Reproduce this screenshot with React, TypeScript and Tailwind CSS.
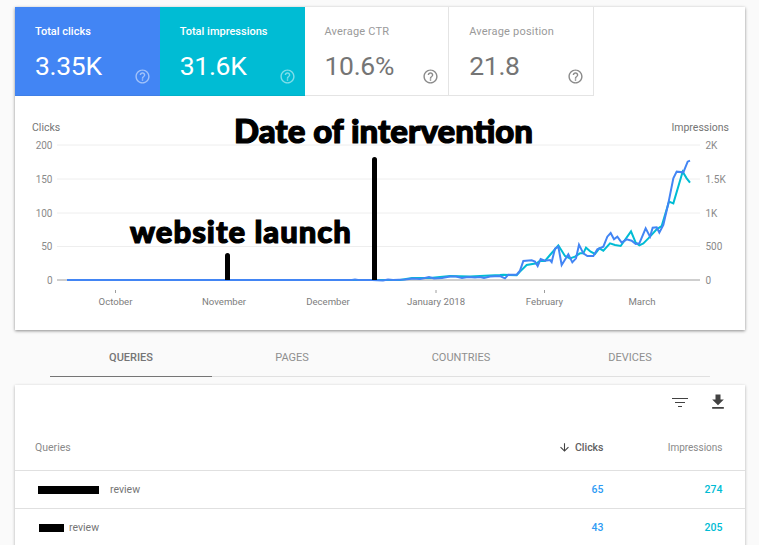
const helpPath =
  'M11 18h2v-2h-2v2zm1-16C6.48 2 2 6.48 2 12s4.48 10 10 10 10-4.48 10-10S17.52 2 12 2zm0 18c-4.41 0-8-3.59-8-8s3.59-8 8-8 8 3.59 8 8-3.59 8-8 8zm0-14c-2.21 0-4 1.79-4 4h2c0-1.1.9-2 2-2s2 .9 2 2c0 2-3 1.75-3 5h2c0-2.25 3-2.5 3-5 0-2.21-1.79-4-4-4z';

const tiles = [
  { label: 'Total clicks', value: '3.35K', active: 'bg-[#4285f4] border-[#3f7fe6]' },
  { label: 'Total impressions', value: '31.6K', active: 'bg-[#00bcd4] border-[#00b2c9]' },
  { label: 'Average CTR', value: '10.6%', active: '' },
  { label: 'Average position', value: '21.8', active: '' },
];

const Tile = ({ label, value, active }: { label: string; value: string; active: string }) => (
  <div
    className={`relative h-[89px] w-[144.75px] shrink-0 border-b pl-5 pt-[18px] ${
      active ? `${active} text-white` : 'border-r border-[#e4e4e4] bg-white text-[#757575]'
    }`}
  >
    <div className={`text-[11px] leading-[13px] ${active ? 'font-medium' : 'tracking-[0.2px] text-[#9a9a9a]'}`}>
      {label}
    </div>
    <div className="mt-[12px] text-[26.5px] leading-[32px] tracking-[-0.3px]">{value}</div>
    <svg
      viewBox="0 0 24 24"
      className={`absolute right-[9px] top-[61px] h-[17px] w-[17px] ${active ? 'fill-white/50' : 'fill-[#8a8a8a]'}`}
    >
      <path d={helpPath} />
    </svg>
  </div>
);

// points read off the reference, in page pixels
const leftClicks: [number, number][] = [
  [67, 280], [352, 280], [355, 279.5], [358, 280], [372, 280], [383, 280.5], [388, 279.5], [393, 280],
  [405, 279.5], [413, 278.5], [420, 279], [425, 278], [429, 277], [434, 278.5], [442, 278], [450, 276.5],
  [456, 276.5], [462, 278], [468, 277], [475, 277.5], [480, 277], [484, 278], [490, 276.5], [500, 276],
];
const leftImpr: [number, number][] = [
  [67, 280], [355, 280], [400, 280], [412, 278], [420, 278], [430, 278], [450, 276], [470, 276.5], [500, 275],
];
const zoomed = (pts: number[][]) => pts.map(([x, y]) => [500 + x / 3, 150 + y / 3]);
const clicks = [
  ...leftClicks,
  ...zoomed([
    [15, 385], [25, 374], [50, 374], [60, 362], [70, 333], [95, 331], [105, 335], [113, 348], [122, 327],
    [135, 332], [150, 330], [155, 336], [165, 296], [175, 290], [185, 345], [205, 313], [217, 337], [228, 325],
    [237, 284], [250, 310], [262, 318], [280, 318], [292, 298], [310, 290], [322, 260], [332, 249], [342, 268],
    [352, 260], [365, 278], [380, 268], [395, 272], [407, 282], [418, 280], [437, 235], [450, 260], [458, 233],
    [470, 232], [478, 248], [490, 225], [505, 160], [520, 85], [530, 65], [550, 67], [563, 35], [570, 32],
  ]),
];
const impressions = [
  ...leftImpr,
  ...zoomed([
    [10, 374], [50, 376], [60, 365], [80, 345], [110, 340], [120, 332], [135, 333], [150, 315], [175, 286],
    [195, 318], [210, 325], [225, 320], [240, 310], [250, 310], [258, 293], [272, 305], [285, 312], [298, 295],
    [310, 302], [330, 280], [345, 285], [362, 288], [393, 244], [407, 278], [418, 286], [430, 280], [445, 265],
    [470, 238], [485, 228], [507, 155], [520, 160], [548, 65], [560, 85], [570, 98],
  ]),
];
const toPoints = (pts: number[][]) => pts.map(([x, y]) => `${x},${y}`).join(' ');

const gridRows = [
  { y: 145, l: '200', r: '2K' },
  { y: 179, l: '150', r: '1.5K' },
  { y: 213, l: '100', r: '1K' },
  { y: 246.5, l: '50', r: '500' },
  { y: 280, l: '0', r: '0' },
];
const months = [
  { x: 115.5, t: 'October', tick: true },
  { x: 224, t: 'November', tick: false },
  { x: 328, t: 'December', tick: false },
  { x: 436, t: 'January 2018', tick: true },
  { x: 544.5, t: 'February', tick: true },
  { x: 642, t: 'March', tick: false },
];

const Chart = () => (
  <svg viewBox="15 96 730 234" className="block h-[234px] w-[730px]" fontFamily="Roboto, sans-serif" fontSize="10.5">
    <text x="32" y="131" fill="#757575">Clicks</text>
    <text x="729" y="131" fill="#757575" textAnchor="end">Impressions</text>
    {gridRows.map((r, i) => (
      <g key={r.y} fontSize="10">
        <line x1="57" x2="700" y1={r.y} y2={r.y} stroke={i === 4 ? '#9e9e9e' : '#eeeeee'} />
        <text x="52.5" y={r.y + 3.5} fill="#8a8a8a" textAnchor="end">{r.l}</text>
        <text x="705.5" y={r.y + 3.5} fill="#8a8a8a">{r.r}</text>
      </g>
    ))}
    {months.map((m) => (
      <g key={m.t} fontSize="9.6">
        {m.tick && <line x1={m.x} x2={m.x} y1="290" y2="293" stroke="#9e9e9e" />}
        <text x={m.x} y="305" fill="#7d7d7d" textAnchor="middle">{m.t}</text>
      </g>
    ))}
    <polyline points={toPoints(impressions)} fill="none" stroke="#00bcd4" strokeWidth="2" />
    <polyline points={toPoints(clicks)} fill="none" stroke="#4285f4" strokeWidth="2" />
  </svg>
);

const rows = [
  { bar: 'w-[61px] ml-[23px]', gap: 'ml-[11px]', clicks: 65, impressions: 274 },
  { bar: 'w-[25px] ml-[24px]', gap: 'ml-[5px]', clicks: 43, impressions: 205 },
];

export default function App() {
  return (
    <div className="h-[545px] w-[759px] overflow-hidden bg-[#fafafa] pl-[15px] pt-[7px] font-['Roboto',sans-serif]">
      <div className="w-[730px] bg-white shadow-[0_1px_3px_rgba(0,0,0,0.45)]">
        <div className="flex">
          {tiles.map((t) => (
            <Tile key={t.label} {...t} />
          ))}
        </div>
        <div className="relative">
          <Chart />
          {/* hand-added annotations on top of the chart */}
          <div className="absolute left-[219px] top-[15px] whitespace-nowrap font-['Lato',sans-serif] text-[33px] font-black leading-[38px] text-black [-webkit-text-stroke:1.2px_black]">
            Date of intervention
          </div>
          <div className="absolute left-[115px] top-[117px] whitespace-nowrap font-['Lato',sans-serif] text-[31px] font-black leading-[36px] tracking-[1px] text-black [-webkit-text-stroke:1.2px_black]">
            website launch
          </div>
          <div className="absolute left-[210px] top-[157px] h-[27px] w-[5px] rounded-t-full bg-black" />
          <div className="absolute left-[357px] top-[61px] h-[123px] w-[5px] rounded-t-full bg-black" />
        </div>
      </div>

      <div className="mt-[14px] ml-[35px] flex w-[660px] border-b border-[#e0e0e0] text-[11px] leading-[27px] text-[#8f8f8f]">
        <div className="-mb-px w-[162px] border-b border-[#757575] pb-[5px] text-center font-medium text-[#757575]">QUERIES</div>
        <div className="w-[160px] pb-[5px] text-center">PAGES</div>
        <div className="w-[178px] pb-[5px] text-center">COUNTRIES</div>
        <div className="w-[160px] pb-[5px] text-center">DEVICES</div>
      </div>

      <div className="mt-[8px] w-[730px] bg-white shadow-[0_1px_3px_rgba(0,0,0,0.3)]">
        <div className="flex h-[34px] items-center justify-end gap-[20px] pr-[17px]">
          <svg viewBox="0 0 16 11" className="h-[11px] w-[16px]" stroke="#424242" strokeWidth="1">
            <path d="M0 1.5h16M3 5.5h10M6 9.5h4" />
          </svg>
          <svg viewBox="0 0 24 24" className="h-[20px] w-[20px] fill-[#424242]">
            <path d="M19 9h-4V3H9v6H5l7 7 7-7zM5 18v2h14v-2H5z" />
          </svg>
        </div>
        <div className="flex h-[52px] items-center border-b border-[#e0e0e0] pl-5 pr-[22.5px] pt-[6px] text-[10.5px] text-[#8a8a8a]">
          <div className="flex-1">Queries</div>
          <div className="flex w-[100px] items-center justify-end font-medium text-[#616161]">
            <svg viewBox="0 0 24 24" className="mr-[4px] h-[13px] w-[13px] fill-[#424242]">
              <path d="M20 12l-1.41-1.41L13 16.17V4h-2v12.17l-5.58-5.59L4 12l8 8 8-8z" />
            </svg>
            Clicks
          </div>
          <div className="w-[119px] text-right text-[10px]">Impressions</div>
        </div>
        {rows.map((r) => (
          <div key={r.clicks} className="flex h-[38px] items-center border-b border-[#e0e0e0] pr-[22.5px] text-[10.5px] text-[#757575]">
            <div className={`h-[8px] bg-black ${r.bar}`} />
            <div className={`flex-1 ${r.gap}`}>review</div>
            <div className="w-[100px] text-right font-medium text-[#2f9bf4]">{r.clicks}</div>
            <div className="w-[119px] text-right font-medium text-[#00bcd4]">{r.impressions}</div>
          </div>
        ))}
      </div>
    </div>
  );
}
